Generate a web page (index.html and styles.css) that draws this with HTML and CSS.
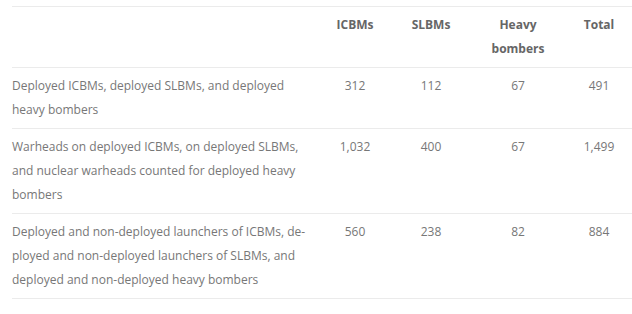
FILE: index.html
```html
<!DOCTYPE html>
<html lang="en">
<head>
<meta charset="utf-8">
<link rel="stylesheet" href="styles.css">
</head>
<body>
<table class="t">
  <colgroup>
    <col class="c1"><col class="c2"><col class="c3"><col class="c4"><col class="c5">
  </colgroup>
  <thead>
    <tr>
      <th></th>
      <th>ICBMs</th>
      <th>SLBMs</th>
      <th>Heavy bombers</th>
      <th>Total</th>
    </tr>
  </thead>
  <tbody>
    <tr>
      <td class="lbl">Deployed ICBMs, deployed SLBMs, and deployed heavy bombers</td>
      <td>312</td><td>112</td><td>67</td><td>491</td>
    </tr>
    <tr>
      <td class="lbl">Warheads on deployed ICBMs, on deployed SLBMs, and nuclear warheads counted for deployed heavy bombers</td>
      <td>1,032</td><td>400</td><td>67</td><td>1,499</td>
    </tr>
    <tr>
      <td class="lbl">Deployed and non-deployed launchers of ICBMs, de&shy;ployed and non-deployed launchers of SLBMs, and deployed and non-deployed heavy bombers</td>
      <td>560</td><td>238</td><td>82</td><td>884</td>
    </tr>
  </tbody>
</table>
</body>
</html>
```
FILE: styles.css
```css
html, body {
  margin: 0;
  padding: 0;
  background: #fff;
}
body {
  padding: 6px 0 0 12px;
  font-family: "Open Sans", "DejaVu Sans", sans-serif;
  font-size: 12px;
  line-height: 24px;
  color: #777;
}
.t {
  border-collapse: collapse;
  table-layout: fixed;
  width: 620px;
  border-top: 1px solid #ebebeb;
}
.c1 { width: 306px; }
.c2 { width: 74px; }
.c3 { width: 78px; }
.c4 { width: 96px; }
.c5 { width: 66px; }
th, td {
  padding: 6px 8px;
  vertical-align: top;
  text-align: center;
  border-bottom: 1px solid #ebebeb;
}
th {
  font-weight: 700;
  color: #666;
}
th:first-child,
td.lbl {
  text-align: left;
  padding-left: 0;
}
```
